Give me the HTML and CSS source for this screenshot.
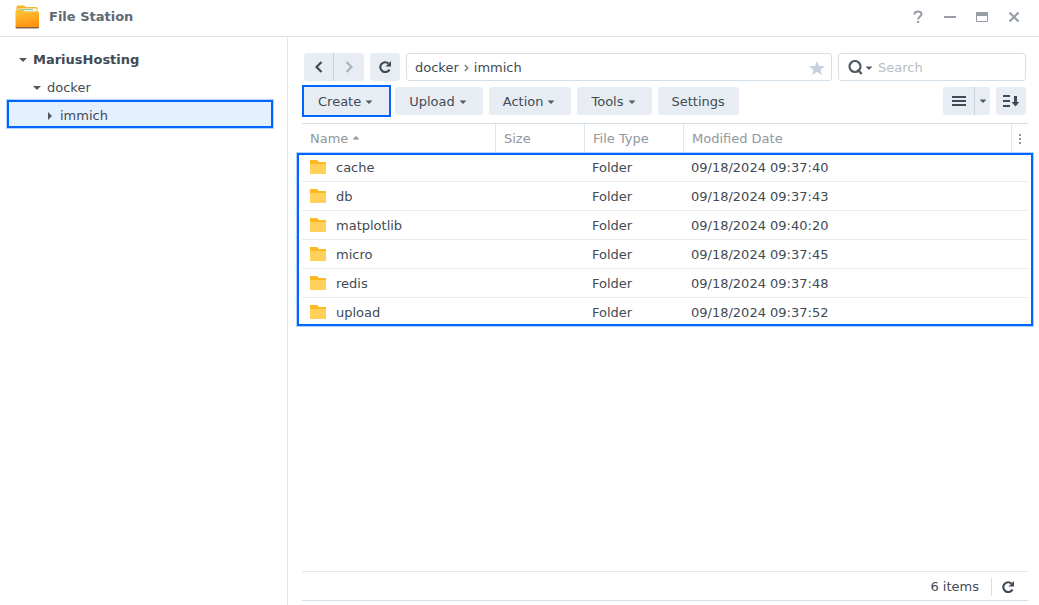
FILE: index.html
```html
<!DOCTYPE html>
<html lang="en">
<head>
<meta charset="utf-8">
<title>File Station</title>
<link rel="stylesheet" href="styles.css">
</head>
<body>
<div class="window">
  <header class="titlebar">
    <svg class="app-icon" width="24" height="24" viewBox="0 0 24 24" aria-hidden="true">
      <defs>
        <linearGradient id="front" x1="0" y1="0" x2="0.3" y2="1">
          <stop offset="0" stop-color="#ffc83a"/><stop offset="1" stop-color="#ff9410"/>
        </linearGradient>
      </defs>
      <path d="M1.500 20V2Q1.500.5 3 .5H9l2 1.500h10Q22.500 2 22.500 3.500V20z" fill="#f9b52c"/>
      <path d="M3.500 3.500h18v5h-18z" fill="#fff"/>
      <path d="M4 4h14v1H4z" fill="#8fcf9a"/>
      <path d="M5 5.500h16v1H5z" fill="#b5dfe8"/>
      <path d="M.5 6Q.5 5 1.500 5H8l2 1.500h13q1 0 1 1V22H.5z" fill="url(#front)"/>
      <path d="M.5 22H24q0 1.500-1 1.500H1.500q-1 0-1-1.500z" fill="#8a6048"/>
    </svg>
    <h1 class="title">File Station</h1>
    <div class="window-controls">
      <button class="control" aria-label="Help"><svg width="12" height="14" viewBox="0 0 12 14"><path d="M2.500 4.500C2.500.5 9.500.5 9.500 4c0 2.500-3.300 2.500-3.300 5.500" fill="none" stroke="currentColor" stroke-width="2"/><path d="M5 11h2.200v2H5z" fill="currentColor"/></svg></button>
      <button class="control" aria-label="Minimize"><svg width="12" height="12" viewBox="0 0 12 12"><path d="M0 5h12v2H0z" fill="currentColor"/></svg></button>
      <button class="control" aria-label="Maximize"><svg width="12" height="12" viewBox="0 0 12 12"><path d="M1 1h10q1 0 1 1v8q0 1-1 1H1q-1 0-1-1V2q0-1 1-1zM1 5v5h10V5z" fill="currentColor" fill-rule="evenodd"/></svg></button>
      <button class="control" aria-label="Close"><svg width="12" height="12" viewBox="0 0 12 12"><path d="M1.500 1.500l9 9M10.500 1.500l-9 9" stroke="currentColor" stroke-width="2.200"/></svg></button>
    </div>
  </header>

  <div class="body">
    <nav class="sidebar" aria-label="Folders">
      <ul class="tree">
        <li class="node root"><svg class="caret" width="8" height="4" viewBox="0 0 8 4"><path d="M0 0h8L4 4z"/></svg>MariusHosting</li>
        <li class="node level-2"><svg class="caret" width="8" height="4" viewBox="0 0 8 4"><path d="M0 0h8L4 4z"/></svg>docker</li>
        <li class="node level-3 selected"><svg class="caret" width="4" height="8" viewBox="0 0 4 8"><path d="M0 0l4 4-4 4z"/></svg>immich</li>
      </ul>
    </nav>

    <main class="main">
      <div class="toolbar">
        <div class="split">
          <button class="btn icon" aria-label="Back"><svg width="8" height="12" viewBox="0 0 8 12"><path d="M6.500 1L1.500 6l5 5" fill="none" stroke="currentColor" stroke-width="2.200"/></svg></button>
          <button class="btn icon" aria-label="Forward" disabled><svg width="8" height="12" viewBox="0 0 8 12"><path d="M1.500 1l5 5-5 5" fill="none" stroke="currentColor" stroke-width="2.200"/></svg></button>
        </div>
        <button class="btn icon" aria-label="Refresh"><svg width="12" height="12" viewBox="0 0 12 12"><path d="M10.500 8.500A4.900 4.900 0 1 1 9.500 2.500" fill="none" stroke="currentColor" stroke-width="2.200"/><path d="M12 0v5.500H6.500z" fill="currentColor"/></svg></button>
        <div class="path">
          <a class="crumb" href="#">docker</a>
          <svg width="5" height="8" viewBox="0 0 5 8" aria-hidden="true"><path d="M.8 1L3.800 4 .8 7" fill="none" stroke="#6f7984" stroke-width="1.400"/></svg>
          <a class="crumb" href="#">immich</a>
          <button class="star" aria-label="Add to favorites"><svg width="16" height="14" viewBox="0 0 16 14"><path d="M8 0l2 5 6 .2-4.600 3.500L13 14l-5-3-5 3 1.600-5.300L0 5.200 6 5z" fill="currentColor"/></svg></button>
        </div>
        <label class="search">
          <svg width="15" height="15" viewBox="0 0 15 15" aria-hidden="true"><circle cx="7" cy="6.500" r="5.500" fill="none" stroke="#505a64" stroke-width="2.200"/><path d="M9.500 9.500l4.200 4.500" stroke="#505a64" stroke-width="2.400"/></svg>
          <svg class="caret" width="6" height="4" viewBox="0 0 6 4"><path d="M0 .5h6v.5L3 4 0 1z"/></svg>
          <input class="search-input" type="text" placeholder="Search" aria-label="Search">
        </label>
      </div>

      <div class="toolbar actions">
        <button class="btn drop highlighted">Create<svg class="caret" width="6" height="4" viewBox="0 0 6 4"><path d="M0 .5h6v.5L3 4 0 1z"/></svg></button>
        <button class="btn drop">Upload<svg class="caret" width="6" height="4" viewBox="0 0 6 4"><path d="M0 .5h6v.5L3 4 0 1z"/></svg></button>
        <button class="btn drop">Action<svg class="caret" width="6" height="4" viewBox="0 0 6 4"><path d="M0 .5h6v.5L3 4 0 1z"/></svg></button>
        <button class="btn drop">Tools<svg class="caret" width="6" height="4" viewBox="0 0 6 4"><path d="M0 .5h6v.5L3 4 0 1z"/></svg></button>
        <button class="btn">Settings</button>
        <div class="split view">
          <button class="btn list" aria-label="List view"><svg width="14" height="10" viewBox="0 0 14 10"><path d="M0 0h14v2H0zM0 4h14v2H0zM0 8h14v2H0z" fill="currentColor"/></svg></button>
          <button class="btn more" aria-label="View options"><svg class="caret" width="6" height="4" viewBox="0 0 6 4"><path d="M0 .5h6v.5L3 4 0 1z"/></svg></button>
        </div>
        <button class="btn icon" aria-label="Sort"><svg width="16" height="12" viewBox="0 0 16 12"><path d="M0 0h7v2H0zM0 5h7v2H0zM0 10h7v2H0zM11 1h3v6h2.500l-4 4.500-4-4.500H11z" fill="currentColor"/></svg></button>
      </div>

      <div class="files">
        <table class="table">
          <colgroup><col class="c-name"><col class="c-size"><col class="c-type"><col><col class="c-menu"></colgroup>
          <thead>
            <tr>
              <th scope="col">Name<svg class="sort" width="6" height="6" viewBox="0 0 6 6"><path d="M0 3.500V3l3-3 3 3v.5z"/></svg></th>
              <th scope="col">Size</th>
              <th scope="col">File Type</th>
              <th scope="col">Modified Date</th>
              <th scope="col" class="menu"><button class="columns" aria-label="Columns"><svg width="2" height="10" viewBox="0 0 2 10"><path d="M0 0h2v2H0zM0 4h2v2H0zM0 8h2v2H0z" fill="currentColor"/></svg></button></th>
            </tr>
          </thead>
          <tbody>
            <tr><td><span class="file"><svg width="16" height="14" viewBox="0 0 16 14"><path d="M0 0h7l2 2h7v3H0z" fill="#fdb924"/><path d="M0 4h16v10H0z" fill="#ffd05a"/></svg>cache</span></td><td></td><td>Folder</td><td colspan="2">09/18/2024 09:37:40</td></tr>
            <tr><td><span class="file"><svg width="16" height="14" viewBox="0 0 16 14"><path d="M0 0h7l2 2h7v3H0z" fill="#fdb924"/><path d="M0 4h16v10H0z" fill="#ffd05a"/></svg>db</span></td><td></td><td>Folder</td><td colspan="2">09/18/2024 09:37:43</td></tr>
            <tr><td><span class="file"><svg width="16" height="14" viewBox="0 0 16 14"><path d="M0 0h7l2 2h7v3H0z" fill="#fdb924"/><path d="M0 4h16v10H0z" fill="#ffd05a"/></svg>matplotlib</span></td><td></td><td>Folder</td><td colspan="2">09/18/2024 09:40:20</td></tr>
            <tr><td><span class="file"><svg width="16" height="14" viewBox="0 0 16 14"><path d="M0 0h7l2 2h7v3H0z" fill="#fdb924"/><path d="M0 4h16v10H0z" fill="#ffd05a"/></svg>micro</span></td><td></td><td>Folder</td><td colspan="2">09/18/2024 09:37:45</td></tr>
            <tr><td><span class="file"><svg width="16" height="14" viewBox="0 0 16 14"><path d="M0 0h7l2 2h7v3H0z" fill="#fdb924"/><path d="M0 4h16v10H0z" fill="#ffd05a"/></svg>redis</span></td><td></td><td>Folder</td><td colspan="2">09/18/2024 09:37:48</td></tr>
            <tr><td><span class="file"><svg width="16" height="14" viewBox="0 0 16 14"><path d="M0 0h7l2 2h7v3H0z" fill="#fdb924"/><path d="M0 4h16v10H0z" fill="#ffd05a"/></svg>upload</span></td><td></td><td>Folder</td><td colspan="2">09/18/2024 09:37:52</td></tr>
          </tbody>
        </table>
      </div>

      <footer class="status">
        <span class="count">6 items</span>
        <button class="reload" aria-label="Reload"><svg width="12" height="12" viewBox="0 0 12 12"><path d="M10.500 8.500A4.900 4.900 0 1 1 9.500 2.500" fill="none" stroke="currentColor" stroke-width="2.200"/><path d="M12 0v5.500H6.500z" fill="currentColor"/></svg></button>
      </footer>
    </main>
  </div>
</div>
</body>
</html>
```
FILE: styles.css
```css
* { box-sizing: border-box; }

body {
  margin: 0;
  background: #fff;
  color: #414b55;
  font: 13px/18px Verdana, "DejaVu Sans", sans-serif;
}

button {
  margin: 0;
  padding: 0;
  border: 0;
  background: none;
  color: inherit;
  font: inherit;
}

svg { display: block; flex: none; }

.window { display: flex; flex-direction: column; min-height: 100vh; }

.titlebar {
  display: flex;
  align-items: center;
  height: 37px;
  padding: 0 19px 2px 15px;
  border-bottom: 1px solid #dae3ec;
}
.title { margin: 0 0 0 10px; font-size: 13px; color: #5f6973; }
.window-controls { display: flex; gap: 20px; margin-left: auto; color: #969da6; }
.control { display: flex; align-items: center; justify-content: center; width: 12px; height: 16px; }

.body { display: flex; flex: 1; }

.sidebar {
  flex: none;
  width: 288px;
  padding: 7px 14px 0 7px;
  border-right: 1px solid #dfe7ee;
}
.tree { margin: 0; padding: 0; list-style: none; }
.node { display: flex; align-items: center; height: 28px; padding-top: 3px; gap: 6px; }
.root { padding-left: 12px; font-weight: bold; }
.level-2 { padding-left: 26px; }
.level-3 { padding-left: 41px; gap: 8px; }
.selected {
  background: #e3f0fd;
  box-shadow: inset 0 0 0 2px #0066ff, 0 0 0 1px #b3d1ff;
}
.caret { fill: #505a64; }

.main {
  display: flex;
  flex: 1;
  flex-direction: column;
  min-width: 0;
  padding: 16px 11px 4px 14px;
}

.toolbar { display: flex; gap: 6px; padding: 0 2px; }
.actions { padding-top: 6px; padding-bottom: 8px; }

.btn {
  display: flex;
  align-items: center;
  justify-content: center;
  gap: 5px;
  height: 28px;
  padding: 1px 14px 0;
  border-radius: 3px;
  background: #e8edf4;
  color: #414b55;
}
.btn:disabled { color: #aab1ba; }
.drop { padding-right: 17px; }
.icon { width: 30px; padding: 0; }
.highlighted { border-radius: 0; box-shadow: 0 0 0 2px #0066ff; }

.split { display: flex; }
.split .btn:first-child { border-radius: 3px 0 0 3px; border-right: 1px solid #c8d2dd; }
.split .btn:last-child { border-radius: 0 3px 3px 0; }
.view { margin-left: auto; }
.list { width: 32px; padding: 0; }
.more { width: 15px; padding: 0; }

.path, .search {
  display: flex;
  align-items: center;
  height: 28px;
  padding-top: 1px;
  border: 1px solid #d3dfe9;
  border-radius: 3px;
}
.path { flex: 1; gap: 5px; padding-right: 6px; padding-left: 8px; }
.crumb { color: inherit; text-decoration: none; }
.star { margin-left: auto; color: #c5d0dc; }
.search { width: 188px; gap: 3px; padding-left: 9px; }
.search-input {
  flex: 1;
  min-width: 0;
  padding: 1px 0 0 3px;
  border: 0;
  outline: 0;
  background: none;
  color: inherit;
  font: inherit;
}
.search-input::placeholder { color: #b9bcc0; opacity: 1; }

.files { position: relative; border-top: 1px solid #d3dfe9; }
.files::after {
  content: "";
  position: absolute;
  inset: 29px -5px 0;
  border: 2px solid #0066ff;
  box-shadow: 0 0 0 1px #b3d1ff;
  pointer-events: none;
}

.table { width: 100%; border-spacing: 0; table-layout: fixed; }
.c-name { width: 194px; }
.c-size { width: 89px; }
.c-type { width: 99px; }
.c-menu { width: 16px; }
th, td { height: 29px; padding: 0 8px; text-align: left; }
th { border-right: 1px solid #dfe7ee; color: #90979e; font-weight: normal; }
th.menu { padding: 0; border: 0; }
.columns { display: flex; justify-content: center; width: 100%; }
td { padding: 2px 7px 0; border-bottom: 1px solid #e6ecf3; }
tr:last-child td { height: 28px; border: 0; }
.sort { display: inline-block; margin-left: 5px; vertical-align: middle; fill: #90979e; }
.file { display: flex; align-items: center; gap: 10px; padding-left: 1px; }
.file svg { margin-bottom: 2px; }

.status {
  display: flex;
  align-items: center;
  justify-content: flex-end;
  height: 30px;
  padding-top: 1px;
  margin-top: auto;
  border-top: 1px solid #e3e9f1;
  border-bottom: 1px solid #d3dfe9;
}
.count { padding-right: 12px; border-right: 1px solid #d3dfe9; }
.reload { padding: 0 14px 0 10px; }
```
